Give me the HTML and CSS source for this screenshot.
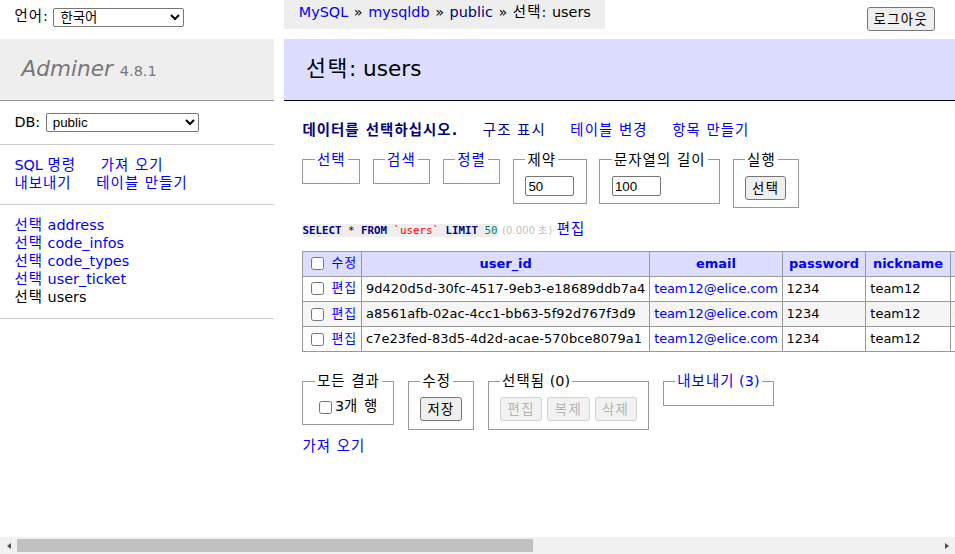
FILE: index.html
```html
<!DOCTYPE html>
<html lang="ko">
<head>
<meta charset="utf-8">
<title>선택: users - Adminer</title>
<link rel="stylesheet" href="styles.css">
</head>
<body>
<div class="page">
  <aside class="side">
    <div class="lang"><span class="k">언어</span>: <select class="lang-select"><option>한국어</option></select></div>
    <div class="menu">
      <h1><a href="#" class="brand">Adminer</a> <span class="version">4.8.1</span></h1>
      <p class="dbs">DB: <select class="db-select"><option>public</option></select></p>
      <p class="links"><a href="#">SQL <span class="k">명령</span></a> <a href="#" class="k">가져 오기</a><br><a href="#" class="k">내보내기</a> <a href="#" class="k">테이블 만들기</a></p>
      <ul class="tables">
        <li><a href="#" class="k">선택</a> <a href="#">address</a></li>
        <li><a href="#" class="k">선택</a> <a href="#">code_infos</a></li>
        <li><a href="#" class="k">선택</a> <a href="#">code_types</a></li>
        <li><a href="#" class="k">선택</a> <a href="#">user_ticket</a></li>
        <li><a href="#" class="k current">선택</a> <a href="#" class="current">users</a></li>
      </ul>
    </div>
  </aside>
  <main class="content">
    <div class="topbar">
      <div class="breadcrumb"><a href="#">MySQL</a> » <a href="#">mysqldb</a> » <a href="#" class="visited">public</a> » <span class="k">선택</span>: users</div>
      <button class="btn logout k" type="button">로그아웃</button>
    </div>
    <h2><span class="k">선택</span>: users</h2>
    <p class="viewlinks"><a href="#" class="visited bold k">데이터를 선택하십시오.</a> <a href="#" class="visited k">구조 표시</a> <a href="#" class="k">테이블 변경</a> <a href="#" class="k">항목 만들기</a></p>
    <form class="selectform">
      <fieldset><legend><a href="#" class="k">선택</a></legend></fieldset>
      <fieldset><legend><a href="#" class="k">검색</a></legend></fieldset>
      <fieldset><legend><a href="#" class="k">정렬</a></legend></fieldset>
      <fieldset><legend class="k">제약</legend><div class="fs-body"><input class="size" type="text" value="50"></div></fieldset>
      <fieldset><legend class="k">문자열의 길이</legend><div class="fs-body"><input class="size" type="text" value="100"></div></fieldset>
      <fieldset><legend class="k">실행</legend><div class="fs-body"><button class="btn k" type="button">선택</button></div></fieldset>
    </form>
    <p class="sql"><code class="jush"><b>SELECT</b> * <b>FROM</b> <span class="bac">`users`</span> <b>LIMIT</b> <span class="num">50</span></code> <span class="time">(0.000 <span class="k">초</span>)</span> <a href="#" class="k">편집</a></p>
    <table class="data">
      <thead>
        <tr>
          <td><input type="checkbox"> <a href="#" class="k">수정</a></td>
          <th><a href="#">user_id</a></th>
          <th><a href="#">email</a></th>
          <th><a href="#">password</a></th>
          <th><a href="#">nickname</a></th>
          <th><a href="#">phone_number</a></th>
          <th><a href="#">profile_image</a></th>
          <th><a href="#">created_at</a></th>
          <th><a href="#">updated_at</a></th>
        </tr>
      </thead>
      <tbody>
        <tr>
          <td><input type="checkbox"> <a href="#" class="k">편집</a></td>
          <td>9d420d5d-30fc-4517-9eb3-e18689ddb7a4</td>
          <td><a href="#">team12@elice.com</a></td>
          <td>1234</td>
          <td>team12</td>
          <td>010-1234-5678</td>
          <td>https://example.com/profile/default.png</td>
          <td>2023-05-30 12:00:00</td>
          <td>2023-05-30 12:00:00</td>
        </tr>
        <tr class="odd">
          <td><input type="checkbox"> <a href="#" class="k">편집</a></td>
          <td>a8561afb-02ac-4cc1-bb63-5f92d767f3d9</td>
          <td><a href="#">team12@elice.com</a></td>
          <td>1234</td>
          <td>team12</td>
          <td>010-1234-5678</td>
          <td>https://example.com/profile/default.png</td>
          <td>2023-05-30 12:00:00</td>
          <td>2023-05-30 12:00:00</td>
        </tr>
        <tr>
          <td><input type="checkbox"> <a href="#" class="k">편집</a></td>
          <td>c7e23fed-83d5-4d2d-acae-570bce8079a1</td>
          <td><a href="#">team12@elice.com</a></td>
          <td>1234</td>
          <td>team12</td>
          <td>010-1234-5678</td>
          <td>https://example.com/profile/default.png</td>
          <td>2023-05-30 12:00:00</td>
          <td>2023-05-30 12:00:00</td>
        </tr>
      </tbody>
    </table>
    <div class="footer">
      <div class="footer-row">
        <fieldset><legend class="k">모든 결과</legend><div class="fs-body"><label><input type="checkbox">3<span class="k">개 행</span></label></div></fieldset>
        <fieldset><legend class="k">수정</legend><div class="fs-body"><button class="btn k" type="button">저장</button></div></fieldset>
        <fieldset><legend><span class="k">선택됨</span> (0)</legend><div class="fs-body btns"><button class="btn k" type="button" disabled>편집</button><button class="btn k" type="button" disabled>복제</button><button class="btn k" type="button" disabled>삭제</button></div></fieldset>
        <fieldset><legend><a href="#"><span class="k">내보내기</span> (3)</a></legend></fieldset>
      </div>
      <p class="import"><a href="#" class="k">가져 오기</a></p>
    </div>
  </main>
</div>
<div class="hscroll">
  <span class="sb-btn"><span class="tri tri-left"></span></span>
  <span class="thumb"></span>
  <span class="sb-track"></span>
  <span class="sb-btn"><span class="tri tri-right"></span></span>
</div>
</body>
</html>
```

FILE: styles.css
```css
html, body {
  margin: 0;
  overflow: hidden;
}
body {
  color: #000;
  background: #fff;
  font: 14.4px/1.25 "DejaVu Sans", "Noto Sans CJK KR", sans-serif;
  height: 554px;
}
a {
  color: #0000ff;
  text-decoration: none;
}
a.visited {
  color: #000080;
}
a.bold {
  font-weight: bold;
}
.k {
  letter-spacing: 0.075em;
}
.page {
  display: flex;
  align-items: flex-start;
}

/* sidebar */
.side {
  width: 273.6px;
  flex-shrink: 0;
}
.lang {
  height: 28.8px;
  box-sizing: border-box;
  padding: 4.32px 14.4px 0;
  line-height: 25.92px;
  white-space: nowrap;
}
select {
  font: 13.33px "Liberation Sans", "Noto Sans CJK KR", sans-serif;
  height: 19px;
  border: 1px solid #767676;
  border-radius: 2px;
  background: #fff;
  color: #000;
  vertical-align: middle;
  padding: 0 0 0 2px;
  margin-left: 1px;
}
.lang-select {
  width: 131px;
}
.db-select {
  width: 153px;
}
.menu {
  margin-top: 10px;
}
h1 {
  font-size: 21.6px;
  line-height: 1.25;
  margin: 0;
  padding: 17.28px 21.6px;
  border-bottom: 1px solid #999;
  font-weight: normal;
  color: #777;
  background: #eee;
  white-space: nowrap;
}
.brand {
  color: #777;
  font-style: italic;
}
.version {
  font-size: 14.47px;
  color: #777;
}
.menu p,
.tables {
  padding: 11.52px 14.4px;
  margin: 0;
  border-bottom: 1px solid #ccc;
}
.tables {
  list-style: none;
  white-space: nowrap;
}
.tables a.current {
  color: #000;
}
.links a {
  margin-right: 20px;
  white-space: nowrap;
}

/* content */
.content {
  flex: 1;
  min-width: 0;
  margin-left: 28.8px;
  padding-bottom: 20px;
}
.topbar {
  display: flex;
  justify-content: space-between;
  align-items: flex-start;
  height: 28.8px;
}
.breadcrumb {
  margin-left: -18px;
  background: #eee;
  height: 28.8px;
  line-height: 25.92px;
  padding: 0 14.4px;
  white-space: nowrap;
  word-spacing: 1px;
}
.btn {
  font: 13.33px "Noto Sans CJK KR", "Liberation Sans", sans-serif;
  height: 24px;
  padding: 0 6px;
  border: 1px solid #767676;
  border-radius: 3px;
  background: #efefef;
  color: #000;
  vertical-align: middle;
  line-height: 20px;
}
.btn.k {
  letter-spacing: 0.1em;
}
.btn:disabled {
  background: #f2f2f2;
  border-color: #d2d2d2;
  color: #b4b4b4;
}
.btns .btn {
  padding: 0 6.5px;
}
.logout {
  margin: 7.2px 20px 0 0;
}
h2 {
  font-size: 21.6px;
  line-height: 1.25;
  margin: 10px 0 20px -18px;
  padding: 17.28px 21.6px;
  border-bottom: 1px solid #000;
  color: #000;
  font-weight: normal;
  background: #ddf;
}
.viewlinks {
  margin: 0;
  white-space: nowrap;
}
.viewlinks a {
  margin-right: 20px;
}
fieldset {
  margin: 0;
  padding: 7.2px 11.52px;
  border: 1px solid #999;
  min-width: 0;
}
legend {
  padding: 0 2px;
  line-height: 18px;
  white-space: nowrap;
}
.selectform {
  display: flex;
  align-items: flex-start;
  gap: 12.5px;
  margin-top: 11.52px;
}
.fs-body {
  white-space: nowrap;
}
.size {
  width: 49px;
  height: 20px;
  box-sizing: border-box;
  border: 1px solid #767676;
  border-radius: 2px;
  padding: 1px 2px;
  font: 13.33px "Liberation Sans", sans-serif;
  vertical-align: middle;
}
.sql {
  margin: 11.52px 0 0;
  white-space: nowrap;
}
code.jush {
  font: 10.8px/1.25 "DejaVu Sans Mono", monospace;
  background: #eee;
  color: #000;
}
code.jush b {
  color: #000080;
  font-weight: bold;
}
.bac {
  color: red;
}
.num {
  color: #007f7f;
}
.time {
  color: silver;
  font-size: 10.08px;
}

/* table */
.data {
  margin-top: 12.96px;
  border-collapse: collapse;
  font-size: 12.96px;
  line-height: 1.25;
  white-space: pre;
}
.data td,
.data th {
  border: 1px solid #999;
  padding: 2.59px 3.89px;
  text-align: left;
}
.data tbody td:nth-child(2) {
  letter-spacing: 0.08px;
}
.data tbody td:nth-child(3) {
  letter-spacing: -0.1px;
}
.data thead th {
  text-align: center;
  padding: 2.59px 6.48px;
  background: #ddf;
  font-weight: bold;
}
.data thead td {
  background: #ddf;
}
.data tr.odd td {
  background: #f5f5f5;
}
input[type="checkbox"] {
  vertical-align: middle;
  margin: 3px 3px 3px 4px;
  width: 13px;
  height: 13px;
}

/* footer */
.footer {
  padding-top: 20px;
}
.footer-row {
  display: flex;
  align-items: flex-start;
  gap: 13.5px;
}
.btns {
  display: flex;
  gap: 5px;
}
.import {
  margin: 0;
  padding-top: 7.2px;
}

/* horizontal scrollbar */
.hscroll {
  position: fixed;
  left: 0;
  right: 0;
  bottom: 0;
  height: 17px;
  background: #f1f1f1;
  display: flex;
  align-items: center;
}
.sb-btn {
  width: 17px;
  height: 17px;
  flex: none;
  display: flex;
  align-items: center;
  justify-content: center;
}
.tri {
  width: 0;
  height: 0;
  border-top: 3.5px solid transparent;
  border-bottom: 3.5px solid transparent;
}
.tri-left {
  border-right: 4px solid #505050;
}
.tri-right {
  border-left: 4px solid #505050;
}
.thumb {
  flex: none;
  width: 516px;
  height: 13px;
  background: #c1c1c1;
}
.sb-track {
  flex: 1;
}
```
